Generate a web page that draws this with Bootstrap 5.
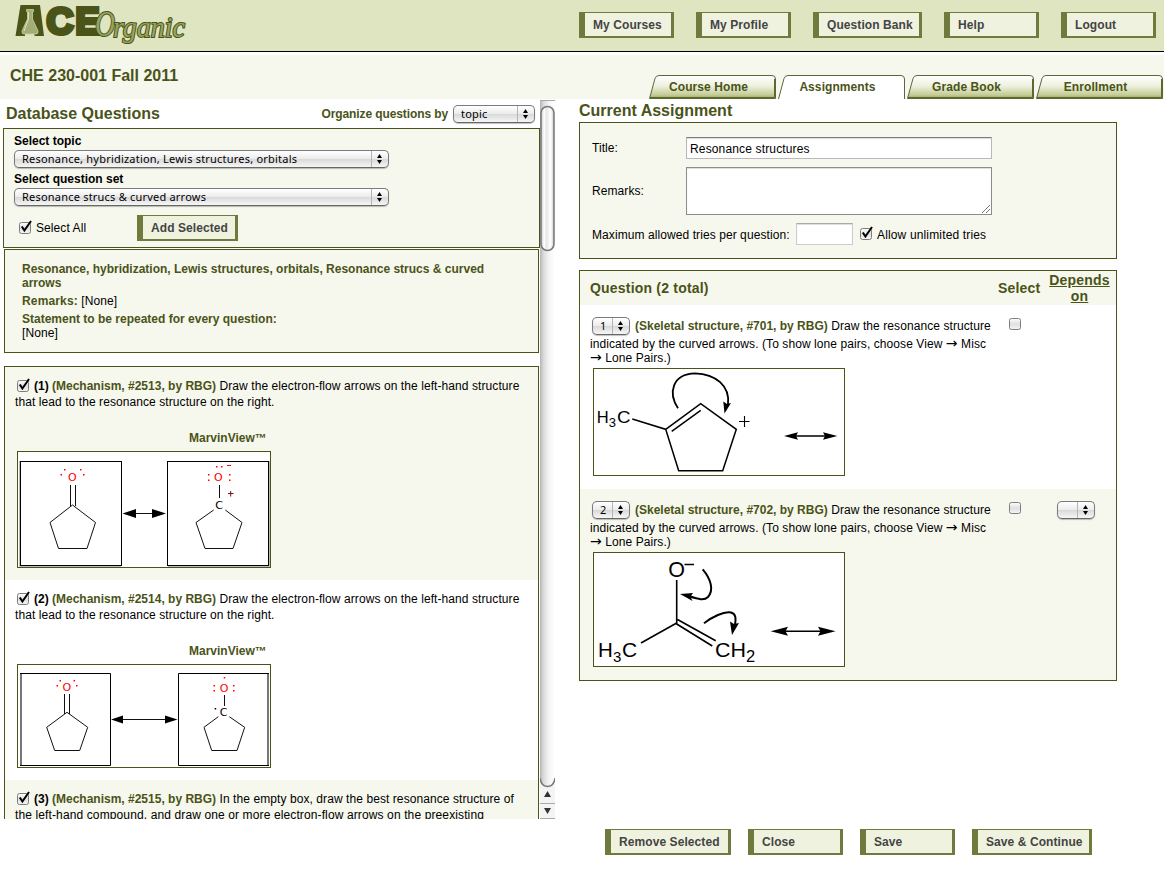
<!DOCTYPE html>
<html lang="en">
<head>
<meta charset="utf-8">
<title>ACE Organic - Assignments</title>
<link href="https://cdn.jsdelivr.net/npm/bootstrap@5.3.0/dist/css/bootstrap.min.css" rel="stylesheet">
<style>
:root{--olive:#4a5318;--edge:#6f7b3c;--pale:#f6f7ed}
body{font:12px/14px "Liberation Sans",Arial,sans-serif;letter-spacing:.08px;color:#000;background:#fff;overflow:hidden;width:1164px;height:871px}
b{font-weight:700;letter-spacing:0}
.topbar{height:52px;background:#dfe5c1;border-bottom:1px solid #000}
.band{height:44px;margin-top:3px;background:#f6f7ed}
.olive{color:var(--olive)}
.h16{font-size:16px;line-height:18px;font-weight:700;color:var(--olive);letter-spacing:0}
.h14{font-size:14px;line-height:16px;font-weight:700;color:var(--olive);letter-spacing:.2px}
.abtn{height:26px;min-width:95px;padding:0 0 0 8px;border:solid var(--edge);border-width:1px 3px 2px 6px;border-radius:0;background:#eff2df;color:#444;font-size:12px;font-weight:700;line-height:22px;text-align:left;white-space:nowrap;letter-spacing:.08px}
.w101{width:101px}.w109{width:109px}.w120{width:120px}.w126{width:126px}
.tab{width:127px;height:24px;margin-left:2px}
.tab span{left:0;right:8px;top:5px;text-align:center;font-weight:700;color:var(--olive)}
.frame{border:1px solid var(--olive);background:var(--pale)}
.ln{height:14px;line-height:14px;white-space:nowrap}
.arr{font-family:"DejaVu Sans",sans-serif;font-size:14px;line-height:12px}
.popup{appearance:none;height:18px;padding:0 20px 0 7px;border:1px solid #7b7b7b;border-bottom-color:#666;border-radius:5px;font:11px/16px "Noto Sans","Open Sans",sans-serif;letter-spacing:.21px;color:#000;
 background:url("data:image/svg+xml,%3Csvg xmlns='http://www.w3.org/2000/svg' width='17' height='16'%3E%3Cpath d='M.5 0V16' stroke='%23b4b4b4'/%3E%3Cpath d='M8.5 3L11 7H6zM8.5 13L11 9H6z'/%3E%3C/svg%3E") right 0 top 0/17px 16px no-repeat,linear-gradient(#fff,#ececec 48%,#d9d9d9 52%,#f6f6f6);box-shadow:0 1px 1px rgba(0,0,0,.25)}
.cb{width:14px;height:15px;display:block;flex:none;overflow:visible}
.inset{border:1px solid #b9b9b9;border-top-color:#7c7c7c;background:#fff;border-radius:0;padding:0 3px;font-size:12px;color:#000;letter-spacing:.15px;box-shadow:inset 0 1px 1px #ddd}
.faint{border-color:#ccc;border-top-color:#aaa}
.remarks{resize:none;border:1px solid #8c8c8c}
.scroller{width:15px;height:719px;margin-top:1px;background:linear-gradient(90deg,#b5b5b5,#dcdcdc 25%,#f4f4f4 60%,#fff)}
svg{display:block;letter-spacing:0}
svg text{font-family:"Liberation Sans",Arial,sans-serif}
.atom text{font-family:"DejaVu Sans",sans-serif;font-size:11px;text-anchor:middle}
svg .script{font-family:"Liberation Serif",serif;font-style:italic}
.alt{background:var(--pale)}
</style>
</head>
<body>
<svg width="0" height="0" class="position-absolute">
<defs>
<linearGradient id="cg" x1="0" y1="0" x2="0" y2="1"><stop offset="0" stop-color="#fff"/><stop offset=".5" stop-color="#e0e0e0"/><stop offset="1" stop-color="#f5f5f5"/></linearGradient>
<linearGradient id="tg" x1="0" y1="0" x2="0" y2="1"><stop offset="0" stop-color="#fff"/><stop offset=".45" stop-color="#eef1df"/><stop offset=".85" stop-color="#c3cc94"/><stop offset="1" stop-color="#96a35c"/></linearGradient>
<linearGradient id="th" x1="0" y1="0" x2="1" y2="0"><stop offset="0" stop-color="#c9c9c9"/><stop offset=".25" stop-color="#fff"/><stop offset=".4" stop-color="#e6e6e6"/><stop offset=".75" stop-color="#fff"/><stop offset="1" stop-color="#c4c4c4"/></linearGradient>
<symbol id="off" viewBox="0 0 14 15" overflow="visible"><rect x=".5" y="1.5" width="11" height="11" rx="2" fill="url(#cg)" stroke="#7d7d7d"/></symbol>
<symbol id="on" viewBox="0 0 14 15" overflow="visible"><use href="#off"/><path d="M2.800 5.500L5.400 9.500L12 0" fill="none" stroke="#000" stroke-width="2"/></symbol>
<symbol id="tabshape" viewBox="0 0 127 24"><path d="M.5 23.5L6 3.5Q7 .5 10 .5H123Q126.5 .5 126.5 4V23.5Z" fill="url(#tg)" stroke="#5c663c"/><path d="M125.5 4V22.5H1" fill="none" stroke="#5d6a25"/></symbol>
</defs></svg>

<header class="topbar d-flex">
 <svg width="200" height="51" viewBox="0 0 200 51">
  <text x="18" y="35.500" font-weight="700" font-size="40" textLength="24" lengthAdjust="spacingAndGlyphs" fill="#4a5318">A</text>
  <path d="M20.500 5H40L44 36H34.500V34H25V36H15.500Z" fill="#4a5318"/>
  <path d="M26.500 9.500H33.500V11.500H32.500V19L38 31Q38.500 34 36 34H24Q21.500 34 22 31L27.500 19V11.500H26.500Z" fill="#a3ae74" stroke="#c9d2a2" stroke-width=".8"/>
  <path d="M28.500 12V19L24 31" fill="none" stroke="#dfe5c1"/>
  <g font-weight="700" font-size="37.500" fill="#4a5318" stroke="#4a5318" stroke-width="4"><text x="46.500" y="34" textLength="27" lengthAdjust="spacingAndGlyphs">C</text><text x="75.500" y="34" textLength="24" lengthAdjust="spacingAndGlyphs">E</text></g>
  <g fill="#97a35f" stroke="#4a5318" stroke-width="2" paint-order="stroke">
  <text class="script" x="95" y="36" font-size="36" textLength="20" lengthAdjust="spacingAndGlyphs">O</text>
  <text class="script" x="113" y="37" font-size="29" textLength="72" lengthAdjust="spacingAndGlyphs">rganic</text></g>
 </svg>
 <nav class="d-flex ms-auto align-items-start" style="gap:22px;padding:12px 8px 0 0">
  <button class="abtn">My Courses</button><button class="abtn">My Profile</button><button class="abtn w109">Question Bank</button><button class="abtn">Help</button><button class="abtn">Logout</button>
 </nav>
</header>
<div class="band d-flex align-items-end">
 <div class="h16" style="padding:0 0 14px 10px">CHE 230-001 Fall 2011</div>
 <nav class="d-flex ms-auto" style="padding-right:1px">
  <div class="tab position-relative"><svg width="127" height="24"><use href="#tabshape"/></svg><span class="position-absolute">Course Home</span></div>
  <div class="tab position-relative"><svg width="127" height="24"><path d="M.5 24L6 3.500Q7 .5 10 .5H123Q126.500 .5 126.500 4V24" fill="#fff" stroke="#5c663c"/></svg><span class="position-absolute">Assignments</span></div>
  <div class="tab position-relative"><svg width="127" height="24"><use href="#tabshape"/></svg><span class="position-absolute">Grade Book</span></div>
  <div class="tab position-relative"><svg width="127" height="24"><use href="#tabshape"/></svg><span class="position-absolute">Enrollment</span></div>
 </nav>
</div>

<main class="d-flex">
 <section class="d-flex" style="width:579px;height:720px">
  <div class="overflow-hidden" style="width:540px;padding-left:3px">
   <div class="d-flex" style="height:29px;padding-left:3px">
    <div class="h16" style="margin-top:6px">Database Questions</div>
    <b class="olive ms-auto" style="margin:8px 5px 0 0;letter-spacing:-.1px">Organize questions by</b>
    <select class="popup" style="width:82px;margin:6px 5px 0 0"><option>topic</option></select>
   </div>
   <div class="frame" style="height:120px;padding:5px 10px 0">
    <b class="ln d-block">Select topic</b>
    <select class="popup d-block" style="width:375px;margin-top:2px"><option>Resonance, hybridization, Lewis structures, orbitals</option></select>
    <b class="ln d-block" style="margin-top:4px">Select question set</b>
    <select class="popup d-block" style="width:375px;margin-top:2px"><option>Resonance strucs &amp; curved arrows</option></select>
    <div class="d-flex align-items-center" style="margin-top:9px;padding-left:5px"><svg class="cb"><use href="#on"/></svg><span style="margin-left:3px;width:101px">Select All</span><button class="abtn w101">Add Selected</button></div>
   </div>
   <div style="padding:1px 1px 0">
    <div class="frame" style="height:104px;padding:12px 17px 0">
     <b class="ln d-block olive">Resonance, hybridization, Lewis structures, orbitals, Resonance strucs &amp; curved</b>
     <b class="ln d-block olive">arrows</b>
     <div class="ln" style="margin-top:4px"><b class="olive" style="letter-spacing:.15px">Remarks:</b> [None]</div>
     <div class="ln" style="margin-top:4px"><b class="olive">Statement to be repeated for every question:</b></div>
     <div class="ln">[None]</div>
    </div>
    <div class="frame" style="height:470px;margin-top:13px">
     <article class="alt" style="height:213px;padding:12px 0 0 10px">
      <div class="ln d-flex align-items-center"><svg class="cb" style="margin:0 3px 0 2px"><use href="#on"/></svg><span><b>(1) <span class="olive">(Mechanism, #2513, by RBG)</span></b> Draw the electron-flow arrows on the left-hand structure</span></div>
      <div class="ln" style="margin-top:2px">that lead to the resonance structure on the right.</div>
      <b class="ln d-block olive" style="margin:22px 0 6px 174px">MarvinView™</b>
      <svg style="margin-left:2px" width="254" height="117" viewBox="17 451 254 117" fill="none" stroke="#111">
       <rect x="17.500" y="451.500" width="253" height="116" fill="#fff" stroke="#4a5318"/>
       <path d="M19.500 461V566.500H121M269.500 461V566.500H168" stroke="#bbb"/>
       <rect x="20.500" y="461.500" width="101" height="104" stroke="#000"/><rect x="167.500" y="461.500" width="101" height="104" stroke="#000"/>
       <path d="M72.500 505L95.500 522.500L87 548.500H58.500L50 522.500ZM70.500 485V506M75.500 485V506M219.500 485V498M213.700 510L196 522.500L205 548.500H233L242 522.500L225.300 510M130 513.500H160"/>
       <path d="M122.500 513.500L136 509V518ZM166 513.500L152 509V518Z" fill="#000" stroke="none"/>
       <path d="M228 493.500H233.500M230.700 491V496.500" stroke="#711"/>
       <path d="M227 465.500H231" stroke="#f00"/>
       <g class="atom" stroke="none" fill="#f00"><text x="72.300" y="481">O</text><text x="218.300" y="481">O</text><text x="219" y="509" fill="#000">C</text>
       <path d="M64 469h1.500v1.500h-1.500zM60.500 474h1.500v1.500h-1.500zM80 469h1.500v1.500h-1.500zM83 474h1.500v1.500h-1.500zM208 474h1.500v1.500h-1.500zM208 479.500h1.500v1.500h-1.500zM229 474h1.500v1.500h-1.500zM229 479.500h1.500v1.500h-1.500zM216 466h1.500v1.500h-1.500zM221 466h1.500v1.500h-1.500z"/></g>
      </svg>
     </article>
     <article class="bg-white" style="height:200px;padding:12px 0 0 10px">
      <div class="ln d-flex align-items-center"><svg class="cb" style="margin:0 3px 0 2px"><use href="#on"/></svg><span><b>(2) <span class="olive">(Mechanism, #2514, by RBG)</span></b> Draw the electron-flow arrows on the left-hand structure</span></div>
      <div class="ln" style="margin-top:2px">that lead to the resonance structure on the right.</div>
      <b class="ln d-block olive" style="margin:22px 0 6px 174px">MarvinView™</b>
      <svg style="margin-left:2px" width="254" height="104" viewBox="17 664 254 104" fill="none" stroke="#111">
       <rect x="17.500" y="664.500" width="253" height="103" fill="#fff" stroke="#4a5318"/>
       <path d="M21 673V766M268 673V766" stroke="#777" stroke-width="2"/>
       <path d="M20 673.500H110.500V765.500H20M269 673.500H178.500V765.500H269" stroke="#000"/>
       <path d="M67 712.300L87.700 727.300L79.700 750.500H54.700L46.700 727.300ZM64.500 694V714M69.500 694V714M224.500 695V706M218.300 716.700L204 727.300L211.700 750.500H237L244.700 727.300L229.300 716.700M118 719.500H170"/>
       <path d="M111 719.500L123 715.500V723.500ZM177.500 719.500L165 715.500V723.500Z" fill="#000" stroke="none"/>
       <g class="atom" stroke="none" fill="#f00"><text x="66.800" y="691">O</text><text x="224" y="691.500">O</text><text x="223.500" y="716" fill="#000">C</text>
       <path d="M59.500 680h1.500v1.500h-1.500zM56.500 685h1.500v1.500h-1.500zM73.500 680h1.500v1.500h-1.500zM76 685h1.500v1.500h-1.500zM213.500 685h1.500v1.500h-1.500zM213.500 690h1.500v1.500h-1.500zM233 685h1.500v1.500h-1.500zM233 690h1.500v1.500h-1.500zM223.700 677h1.500v1.500h-1.500z"/><path d="M214.700 708h1.500v1.500h-1.500z" fill="#000"/></g>
      </svg>
     </article>
     <article class="alt" style="height:55px;padding:12px 0 0 10px">
      <div class="ln d-flex align-items-center"><svg class="cb" style="margin:0 3px 0 2px"><use href="#on"/></svg><span><b>(3) <span class="olive">(Mechanism, #2515, by RBG)</span></b> In the empty box, draw the best resonance structure of</span></div>
      <div class="ln" style="margin-top:2px;letter-spacing:.12px">the left-hand compound, and draw one or more electron-flow arrows on the preexisting</div>
     </article>
    </div>
   </div>
  </div>
  <div class="scroller">
   <svg width="15" height="719" fill="none"><path d="M0 .5H15" stroke="#aaa"/>
    <rect x="1" y="6.500" width="13" height="144" rx="6.500" fill="url(#th)" stroke="#777" stroke-width="1.500"/>
    <path d="M0 678Q1 686 7.500 686.500Q14 686 15 678V719H0Z" fill="#f4f4f4"/><path d="M0 678Q1 686 7.500 686.500Q14 686 15 678" stroke="#777" stroke-width="1.500"/>
    <path d="M0 703.500H15M0 718.500H15" stroke="#aaa"/><path d="M7.500 691L11 697H4ZM7.500 714L11 708H4Z" fill="#333"/></svg>
  </div>
 </section>

 <section style="width:538px">
  <div class="h16" style="height:23px;padding-top:3px">Current Assignment</div>
  <form class="frame" style="height:137px;padding:14px 12px 0">
   <div class="d-flex align-items-center"><span style="width:94px">Title:</span><input class="inset" style="width:306px;height:22px;padding-top:2px" value="Resonance structures"></div>
   <div class="d-flex align-items-center" style="margin-top:8px"><span style="width:94px">Remarks:</span><div class="position-relative" style="width:306px;height:48px"><textarea class="inset remarks w-100 h-100 d-block"></textarea><svg class="position-absolute" style="right:2px;bottom:2px" width="8" height="8" stroke="#777"><path d="M0 8L8 0M4 8L8 4"/></svg></div></div>
   <div class="d-flex align-items-center" style="margin-top:8px"><span style="width:204px;padding-top:2px">Maximum allowed tries per question:</span><input class="inset faint" style="width:57px;height:22px"><svg class="cb" style="margin:0 3px 0 7px"><use href="#on"/></svg><span style="padding-top:2px;letter-spacing:.15px">Allow unlimited tries</span></div>
  </form>
  <div class="frame bg-white" style="height:411px;margin-top:11px">
   <div class="alt d-flex h14 align-items-center" style="height:34px;padding-left:10px"><span style="width:408px">Question (2 total)</span><span style="width:50px">Select</span><span class="text-center text-decoration-underline" style="width:65px;margin-left:-1px">Depends<br>on</span></div>
   <article class="d-flex" style="height:184px;padding:12px 0 0 10px">
    <div style="width:419px">
     <div class="d-flex" style="height:18px;padding-left:2px"><select class="popup" style="width:38px;margin-right:5px"><option>1</option></select><span class="ln" style="margin-top:2px"><b class="olive">(Skeletal structure, #701, by RBG)</b> Draw the resonance structure</span></div>
     <div class="ln" style="margin-top:2px">indicated by the curved arrows. (To show lone pairs, choose View <span class="arr">→</span> Misc</div>
     <div class="ln"><span class="arr">→</span> Lone Pairs.)</div>
     <svg style="margin:3px 0 0 3px" width="252" height="108" viewBox="593 368 252 108" fill="none" stroke="#000" stroke-width="1.500">
      <rect x="593.500" y="368.500" width="251" height="107" fill="#fff" stroke="#4a5318" stroke-width="1"/>
      <path d="M632.300 419L665.700 429.300L700.700 403.700L736.300 429.300L722.700 470.700H678.700L665.700 429.300M671.700 431.300L700.700 410.300M792 436H830"/><path d="M739 421.500H749.500M744.500 416V427" stroke-width="1.100"/>
      <path d="M678 408.300C668 393 672 374 695 373.300C716 374 730 386 728 404" stroke-width="1.800"/>
      <path d="M724.500 413.500L723.300 401.500L727 404L731 403ZM784 436L798 432.300L796 436L798 439.700ZM837.300 436L823 432.300L825 436L823 439.700Z" fill="#000" stroke="none"/>
      <g fill="#000" stroke="none"><text x="596.700" y="422.500" font-size="16.500">H</text><text x="608.700" y="426.500" font-size="13">3</text><text x="617" y="422.500" font-size="16.500" textLength="13.500" lengthAdjust="spacingAndGlyphs">C</text></g>
     </svg>
    </div>
    <svg class="cb"><use href="#off"/></svg>
   </article>
   <article class="alt d-flex" style="height:191px;padding:12px 0 0 10px">
    <div style="width:419px">
     <div class="d-flex" style="height:18px;padding-left:2px"><select class="popup" style="width:38px;margin-right:5px"><option>2</option></select><span class="ln" style="margin-top:2px"><b class="olive">(Skeletal structure, #702, by RBG)</b> Draw the resonance structure</span></div>
     <div class="ln" style="margin-top:2px">indicated by the curved arrows. (To show lone pairs, choose View <span class="arr">→</span> Misc</div>
     <div class="ln"><span class="arr">→</span> Lone Pairs.)</div>
     <svg style="margin:3px 0 0 3px" width="252" height="115" viewBox="593 552 252 115" fill="none" stroke="#000" stroke-width="1.600">
      <rect x="593.500" y="552.500" width="251" height="114" fill="#fff" stroke="#4a5318" stroke-width="1"/>
      <path d="M676.700 580V623L641 643M677.500 619.500L715.700 640.700M675.500 623.300L712.300 646M684.500 564.500H694M780 631.300H826"/>
      <path d="M702.700 569.300C711 579 714 590 708 597C704 601 698 599 688 596M704 623.300C712 617 724 611 731 612.500C736 614 736 618 735 625" stroke-width="2"/>
      <path d="M680 594L693 593L690.500 596.700L692.500 601ZM732 635L730 621.500L734 624L739 623ZM770.700 631.300L788 626.800L785.500 631.300L788 635.800ZM835.500 631.300L818 626.800L820.500 631.300L818 635.800Z" fill="#000" stroke="none"/>
      <g fill="#000" stroke="none"><text x="668.300" y="577" font-size="21.500">O</text><text x="598" y="656.700" font-size="20.500">H</text><text x="613" y="661.500" font-size="15">3</text><text x="622" y="656.700" font-size="21">C</text><text x="715" y="656.700" font-size="21" textLength="31" lengthAdjust="spacingAndGlyphs">CH</text><text x="746" y="661.500" font-size="16.500">2</text></g>
     </svg>
    </div>
    <svg class="cb"><use href="#off"/></svg>
    <select class="popup" style="width:38px;margin-left:34px"><option></option></select>
   </article>
  </div>
 </section>
</main>
<footer class="d-flex" style="gap:17px;padding:10px 0 0 605px">
 <button class="abtn w126">Remove Selected</button><button class="abtn">Close</button><button class="abtn">Save</button><button class="abtn w120">Save &amp; Continue</button>
</footer>
<script src="https://cdn.jsdelivr.net/npm/bootstrap@5.3.0/dist/js/bootstrap.bundle.min.js"></script>
</body>
</html>
